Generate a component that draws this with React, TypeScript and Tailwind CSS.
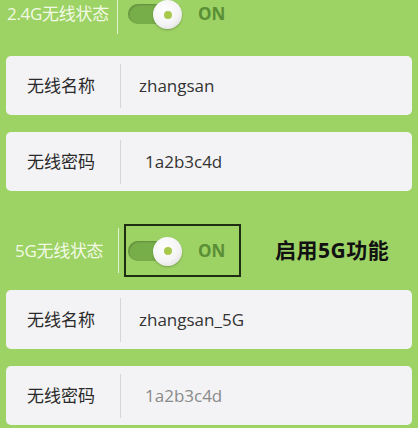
import React from 'react';

const cjk = '"Open Sans", "Noto Sans CJK SC", sans-serif';

function Toggle() {
    return (
        <div className="relative w-[54px] h-[28px]">
            <div className="absolute left-0 top-[4px] w-[42px] h-[20px] rounded-full bg-[#78ae4a] shadow-[inset_1px_1px_2px_rgba(0,0,0,0.2)]" />
            <div className="absolute right-0 top-0 w-[29px] h-[29px] rounded-full bg-[radial-gradient(circle_at_40%_35%,#ffffff_0%,#f4f4f4_55%,#d6d6d6_100%)] shadow-[0_1px_2px_rgba(0,0,0,0.25)] flex items-center justify-center">
                <div className="w-[8px] h-[8px] rounded-full bg-[#a8c94b]" />
            </div>
        </div>
    );
}

function Field({ label, value, indent, muted }: { label: string; value: string; indent?: boolean; muted?: boolean }) {
    return (
        <div className="mx-[6px] h-[59px] rounded-[5px] bg-[#f3f3f5] flex items-center">
            <div className="w-[114px] pl-[21px] text-[17px] text-[#2a2a2a] leading-none">{label}</div>
            <div className="w-px h-[44px] bg-[#d6d6d6]" />
            <div className={`${indent ? 'ml-[24px]' : 'ml-[18px]'} text-[17px] ${muted ? 'text-[#8a8a8a]' : 'text-[#333]'} leading-none`}>{value}</div>
        </div>
    );
}

export default function App() {
    return (
        <div className="w-[418px] h-[428px] overflow-hidden bg-[#9dd265]" style={{ fontFamily: cjk }}>
            {/* 2.4G */}
            <div className="flex h-[34px]">
                <div className="w-[117px] pl-[7px] leading-[28px] text-[17px] tracking-[-0.3px] text-[#f2fae4]">2.4G无线状态</div>
                <div className="w-px bg-[#e3f2cf]" />
                <div className="ml-[10px]">
                    <Toggle />
                </div>
                <div className="ml-[16px] leading-[28px] text-[17px] font-bold text-[#5a8f35]">ON</div>
            </div>

            <div className="mt-[22px]">
                <Field label="无线名称" value="zhangsan" />
            </div>
            <div className="mt-[17px]">
                <Field label="无线密码" value="1a2b3c4d" indent />
            </div>

            {/* 5G */}
            <div className="mt-[33px] h-[53px] flex items-center">
                <div className="w-[118px] pl-[15px] text-[17px] tracking-[-0.3px] text-[#f2fae4] leading-none">5G无线状态</div>
                <div className="w-px h-[45px] bg-[#e3f2cf]" />
                <div className="ml-[5px] w-[117px] h-[53px] border-2 border-[#1f2d12] flex items-center pl-[2px]">
                    <Toggle />
                    <div className="ml-[16px] text-[17px] font-bold text-[#5a8f35] leading-none">ON</div>
                </div>
                <div className="ml-[34px] text-[21px] font-bold text-[#111] leading-none tracking-[0.5px]">启用5G功能</div>
            </div>

            <div className="mt-[13px]">
                <Field label="无线名称" value="zhangsan_5G" />
            </div>
            <div className="mt-[17px]">
                <Field label="无线密码" value="1a2b3c4d" indent muted />
            </div>
        </div>
    );
}
